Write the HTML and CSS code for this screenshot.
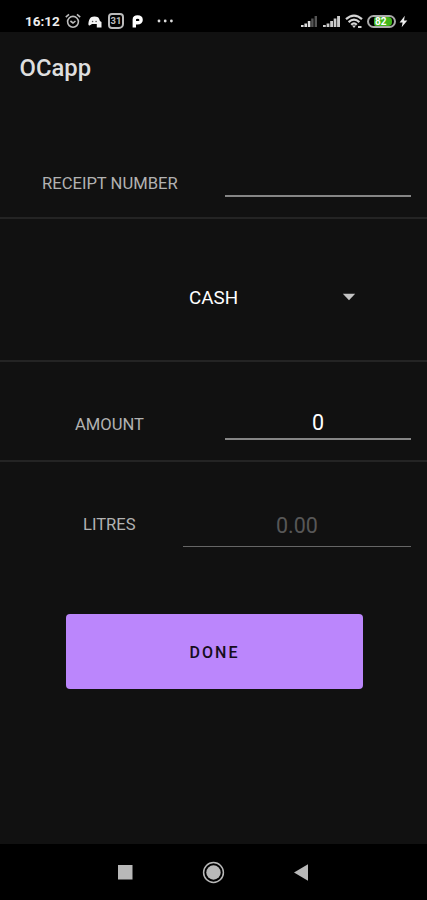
FILE: index.html
```html
<!DOCTYPE html>
<html lang="en">
<head>
<meta charset="utf-8">
<title>OCapp</title>
<link rel="stylesheet" href="styles.css">
</head>
<body>
<div class="status">
  <span class="time">16:12</span>
  <svg class="alarm" width="16" height="16" viewBox="0 0 16 16" fill="none" stroke="#bdbdbd" stroke-width="1.6"><circle cx="8" cy="8.8" r="5.4"/><path d="M.8 4.2 4 1.4M15.2 4.2 12 1.4M5.4 8l2.6 2 2.5-2"/></svg>
  <svg class="game" width="14" height="12" viewBox="0 0 14 12"><path fill="#f4f4f4" d="M3 1.2C5 .3 8 .3 10 1.2c1 .8 1.600 2.300 1.900 3.800L13.500 6v5.500H8.800V8H4L1.600 9.600C.7 9.600.3 9 .4 7.800.6 5 1.400 2.500 3 1.200z"/><circle cx="4.600" cy="5.500" r=".8" fill="#555"/><circle cx="8.100" cy="5.500" r=".8" fill="#555"/></svg>
  <span class="calendar">31</span>
  <svg class="park" width="11" height="13" viewBox="0 0 11 13"><path fill="none" stroke="#fff" stroke-width="3.400" stroke-linejoin="round" d="M2.300 12.500V4.500Q2.300 2 5.500 2C10.300 2 10.300 7.800 5.500 7.800H3"/></svg>
  <svg class="dots" width="16" height="4" viewBox="0 0 16 4" fill="#ddd"><circle cx="2" cy="2" r="1.400"/><circle cx="8.200" cy="2" r="1.400"/><circle cx="14.400" cy="2" r="1.400"/></svg>
  <svg class="signal" width="18" height="13" viewBox="0 0 18 13" fill="#ddd"><path d="M1 10h2.600v2H1zM4.400 8.500H7V12H4.400zM7.800 6h2.600v6H7.800z"/><path fill="#555" d="M11.200 3.500h2.400V12h-2.400zM14.600 1H17v11h-2.400z"/></svg>
  <svg class="signal2" width="19" height="13" viewBox="0 0 19 13" fill="#ccc"><path d="M1 10h2.800v2H1zM4.600 8.500h2.800V12H4.600zM8.200 6H11v6H8.200zM11.700 3.500h2.700V12h-2.700zM15.100 1H18v11h-2.900z"/></svg>
  <svg class="wifi" width="18" height="15" viewBox="0 0 18 15" fill="none" stroke="#d5d5d5" stroke-width="2.200"><path d="M1 5.200Q9-1.800 17 5.200M3.600 8.100q5.400-4.800 10.800 0M6.200 10.700q2.800-2.500 5.600 0"/><path fill="#d5d5d5" stroke="none" d="m9 14-2-2.400h4zM13 12h3.500v2H13z"/></svg>
  <span class="battery"><span class="charge">82</span></span>
  <svg class="bolt" width="9" height="13" viewBox="0 0 9 13"><path fill="#eee" d="M5.800.8.600 7.400h3L2.700 12.300 8.300 5.500H5z"/></svg>
</div>
<header class="appbar">OCapp</header>
<main>
  <section class="row receipt"><span class="label">RECEIPT NUMBER</span><span class="field"></span></section>
  <section class="row payment"><span class="choice">CASH</span><svg class="caret" width="14" height="8" viewBox="0 0 14 8"><path fill="#c4c4c4" d="M.8.800h12.400L7 7.200z"/></svg></section>
  <section class="row amount"><span class="label">AMOUNT</span><span class="field">0</span></section>
  <section class="row litres"><span class="label">LITRES</span><span class="field hint">0.00</span></section>
  <button class="done">DONE</button>
</main>
<nav class="nav">
  <svg width="215" height="24" viewBox="0 0 215 24" fill="#b8b8b8"><rect x="12" y="5" width="14.500" height="14.500"/><circle cx="107.500" cy="12.500" r="7.200"/><circle cx="107.500" cy="12.500" r="9.900" fill="none" stroke="#b8b8b8" stroke-width="1.500"/><path d="M202 4.300v16.400L188 12.500z"/></svg>
</nav>
</body>
</html>
```

FILE: styles.css
```css
* { box-sizing: border-box; }
body {
  margin: 0;
  width: 427px;
  height: 900px;
  display: flex;
  flex-direction: column;
  background: #111;
  color: #fff;
  font-family: Roboto, sans-serif;
  overflow: hidden;
}
svg { display: block; flex: none; }
.status {
  height: 32px;
  flex: none;
  display: flex;
  align-items: center;
  padding: 10px 0 0 25px;
  background: #000;
}
.time { width: 40px; font-size: 13.5px; line-height: 20px; font-weight: 700; color: #eee; }
.game { margin: 1px 0 0 7px; }
.calendar {
  margin-left: 6px;
  width: 16px;
  height: 16px;
  border: 2px solid #bbb;
  border-radius: 4px 4px 5px 4px;
  font-size: 9.5px;
  line-height: 12px;
  font-weight: 700;
  text-align: center;
  color: #bbb;
}
.park { margin-left: 8px; }
.dots { margin-left: 14px; }
.signal { margin-left: 127px; }
.signal2 { margin-left: 4px; }
.wifi { margin-left: 4px; }
.battery {
  margin-left: 4px;
  width: 29px;
  height: 13px;
  padding: 1px 2px 1px 5px;
  border: 2px solid #aaa;
  border-radius: 7px;
  display: flex;
  align-items: center;
}
.charge {
  width: 18px;
  height: 9px;
  flex: none;
  border-radius: 2px 4px 4px 2px;
  background: #42b51b;
  font-size: 10px;
  line-height: 9px;
  font-weight: 700;
  padding-left: 1px;
}
.bolt { margin-left: 3px; }
.appbar {
  height: 72px;
  flex: none;
  padding-left: 19.5px;
  font-size: 23.8px;
  line-height: 72px;
  font-weight: 500;
  color: #dedede;
}
main { flex: 1; display: flex; flex-direction: column; }
.row { display: flex; flex: none; border-bottom: 2px solid #242424; }
.label { font-size: 16.6px; line-height: 20px; color: #b2b2b2; white-space: nowrap; }
.field {
  width: 186px;
  margin: 0 16px 0 auto;
  border-bottom: 2px solid #868686;
  font-size: 21.5px;
  text-align: center;
}
.receipt { height: 115px; padding: 69px 0 0 42px; }
.receipt .label { margin-top: 1px; }
.receipt .field { height: 24px; }
.payment { height: 143px; padding: 69px 0 0 189px; }
.choice { width: 153px; font-size: 18.8px; line-height: 20px; }
.caret { margin-top: 5px; }
.amount { height: 100px; padding: 43px 0 0 75px; }
.amount .label { margin-top: 10px; }
.amount .field { height: 35px; line-height: 36px; }
.litres { height: 85px; padding: 42px 0 0 83px; border: 0; }
.litres .label { margin-top: 11px; }
.litres .field { width: 228px; height: 43px; line-height: 44px; }
.litres .hint { color: #575757; border-bottom: 1px solid #666; }
.done {
  width: 297px;
  height: 75px;
  margin: 67px 0 0 65.5px;
  padding: 2px 0 0 1px;
  border: 0;
  border-radius: 4px;
  background: #bb86fc;
  color: #160d20;
  font: 500 16px Roboto, sans-serif;
  letter-spacing: 2px;
}
.nav {
  height: 56px;
  flex: none;
  background: #000;
  padding: 16px 106px;
}
```
